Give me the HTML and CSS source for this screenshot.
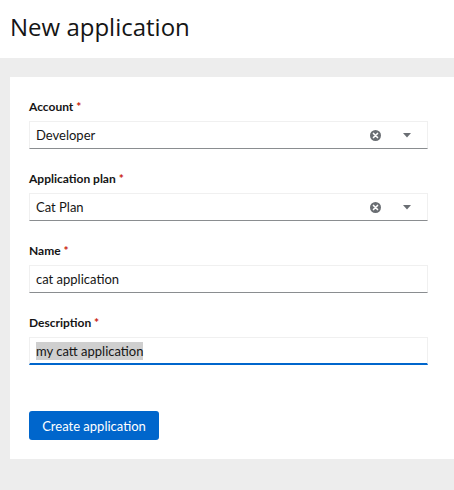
FILE: index.html
```html
<!DOCTYPE html>
<html>
<head>
<meta charset="utf-8">
<link rel="stylesheet" href="styles.css">
</head>
<body>
<header class="page-header">
  <h1 class="title">New application</h1>
</header>
<main class="page-body">
  <form class="card">
    <div class="field">
      <label class="label">Account <span class="req">*</span></label>
      <div class="control select">
        <span class="value">Developer</span>
        <span class="icons">
          <svg class="clear" width="11" height="11" viewBox="0 0 12 12"><circle cx="6" cy="6" r="6" fill="#6a6e73"/><path d="M3.8 3.8 L8.2 8.2 M8.2 3.8 L3.8 8.2" stroke="#fff" stroke-width="1.8" stroke-linecap="round"/></svg>
          <svg class="caret" width="8" height="5" viewBox="0 0 8 5"><path d="M0 0 H8 L4 4.5 Z" fill="#6a6e73"/></svg>
        </span>
      </div>
    </div>
    <div class="field">
      <label class="label">Application plan <span class="req">*</span></label>
      <div class="control select">
        <span class="value">Cat Plan</span>
        <span class="icons">
          <svg class="clear" width="11" height="11" viewBox="0 0 12 12"><circle cx="6" cy="6" r="6" fill="#6a6e73"/><path d="M3.8 3.8 L8.2 8.2 M8.2 3.8 L3.8 8.2" stroke="#fff" stroke-width="1.8" stroke-linecap="round"/></svg>
          <svg class="caret" width="8" height="5" viewBox="0 0 8 5"><path d="M0 0 H8 L4 4.5 Z" fill="#6a6e73"/></svg>
        </span>
      </div>
    </div>
    <div class="field">
      <label class="label">Name <span class="req">*</span></label>
      <div class="control">
        <span class="value">cat application</span>
      </div>
    </div>
    <div class="field">
      <label class="label">Description <span class="req">*</span></label>
      <div class="control focused">
        <span class="value selected">my catt application</span>
      </div>
    </div>
    <div class="actions">
      <button type="button" class="btn-primary">Create application</button>
    </div>
  </form>
</main>
</body>
</html>
```

FILE: styles.css
```css
* { box-sizing: border-box; }
html, body { margin: 0; padding: 0; }
body {
  width: 454px;
  height: 490px;
  background: #ededed;
  font-family: "Lato", "Open Sans", sans-serif;
  color: #151515;
  overflow: hidden;
}
.page-header {
  background: #fff;
  height: 58px;
  padding: 11px 10px 0 10px;
}
.title {
  margin: 0;
  font-family: "Open Sans", sans-serif;
  font-weight: 400;
  font-size: 24px;
  line-height: 32px;
  color: #151515;
}
.page-body {
  padding: 19px 0 0 10px;
}
.card {
  background: #fff;
  height: 382px;
  padding: 22px 26px 0 19px;
  display: flex;
  flex-direction: column;
}
.field {
  display: flex;
  flex-direction: column;
  gap: 6px;
  margin-bottom: 22px;
}
.label {
  font-size: 12px;
  font-weight: 700;
  line-height: 16px;
  color: #151515;
}
.req { color: #c9190b; }
.control {
  height: 28px;
  border: 1px solid #f0f0f0;
  border-bottom-color: #8a8d90;
  display: flex;
  align-items: center;
  padding: 0 6px 0 6px;
  font-size: 13px;
}
.control.focused {
  border-bottom: 2px solid #0066cc;
}
.value { flex: 1; line-height: 18px; }
.value.selected { flex: 0 0 auto; background: #cfcfcf; }
.icons {
  display: flex;
  align-items: center;
  gap: 22px;
  padding-right: 10px;
}
.actions {
  margin-top: 24px;
}
.btn-primary {
  background: #0066cc;
  color: #fff;
  border: none;
  border-radius: 3px;
  height: 29px;
  width: 130px;
  padding: 0;
  font-family: inherit;
  font-size: 13px;
}
```
